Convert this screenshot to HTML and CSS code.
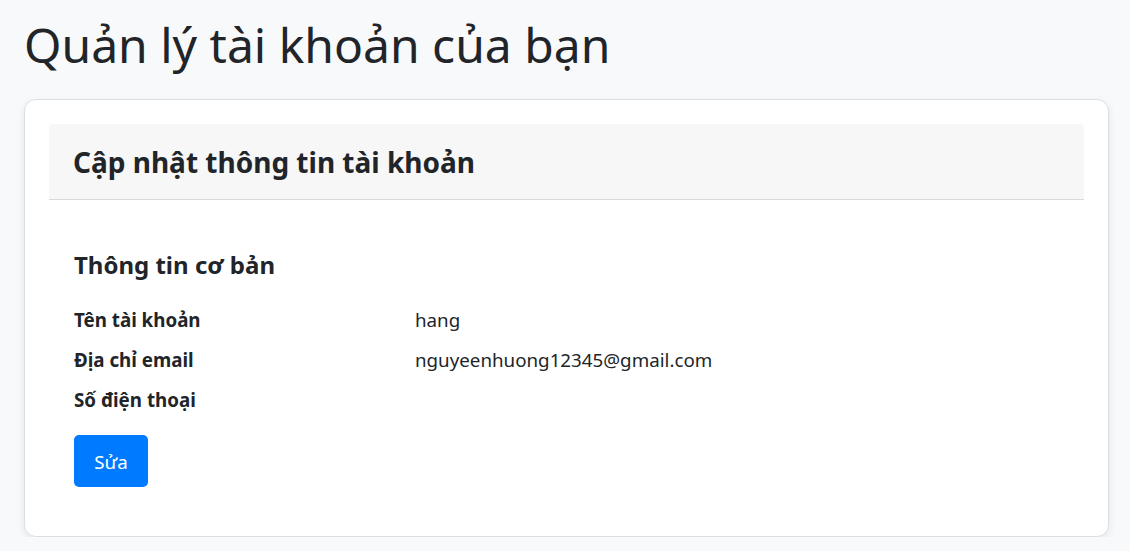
FILE: index.html
```html
<!DOCTYPE html>
<html lang="vi">
<head>
<meta charset="utf-8">
<title>Quản lý tài khoản của bạn</title>
<link rel="stylesheet" href="styles.css">
</head>
<body>
<main class="page">
  <h1 class="page-title">Quản lý tài khoản của bạn</h1>
  <section class="card">
    <div class="card-inner">
      <div class="card-header">
        <h2 class="card-title">Cập nhật thông tin tài khoản</h2>
      </div>
      <div class="card-body">
        <h3 class="section-title">Thông tin cơ bản</h3>
        <div class="info-grid">
          <div class="info-label">Tên tài khoản</div>
          <div class="info-value">hang</div>
          <div class="info-label">Địa chỉ email</div>
          <div class="info-value">nguyeenhuong12345@gmail.com</div>
          <div class="info-label">Số điện thoại</div>
          <div class="info-value"></div>
        </div>
        <button class="btn-primary" type="button">Sửa</button>
      </div>
    </div>
  </section>
</main>
</body>
</html>
```
FILE: styles.css
```css
* { box-sizing: border-box; }
html, body { margin: 0; padding: 0; }
body {
  background: #f8f9fa;
  color: #212529;
  font-family: "Noto Sans", "Open Sans", sans-serif;
}
.page {
  padding: 14px 21px 0 24px;
}
.page-title {
  margin: 0 0 23px 0;
  font-size: 48px;
  font-weight: 400;
  line-height: 62px;
}
.card {
  background: #fff;
  border: 1px solid #dcdfe2;
  border-radius: 12px;
  box-shadow: 0 3px 8px rgba(0,0,0,0.08);
  padding: 24px;
}
.card-header {
  background: #f7f7f7;
  border-bottom: 1px solid #dadada;
  border-radius: 4px 4px 0 0;
  padding: 0 24px;
  height: 76px;
  display: flex;
  align-items: center;
}
.card-title {
  margin: 0;
  font-size: 28px;
  font-weight: 700;
}
.card-body {
  padding: 48px 25px 25px 25px;
}
.section-title {
  margin: 0 0 18px 0;
  font-size: 24px;
  font-weight: 700;
  line-height: 34px;
}
.info-grid {
  display: grid;
  grid-template-columns: 341px 1fr;
  row-gap: 0;
  font-size: 18.75px;
  line-height: 40px;
}
.info-label { font-weight: 700; }
.info-value { font-weight: 400; min-height: 40px; }
.btn-primary {
  margin-top: 15px;
  background: #007bff;
  color: #fff;
  border: none;
  border-radius: 5px;
  width: 74px;
  height: 52px;
  font-family: inherit;
  font-size: 18.75px;
  padding: 0;
}
```
